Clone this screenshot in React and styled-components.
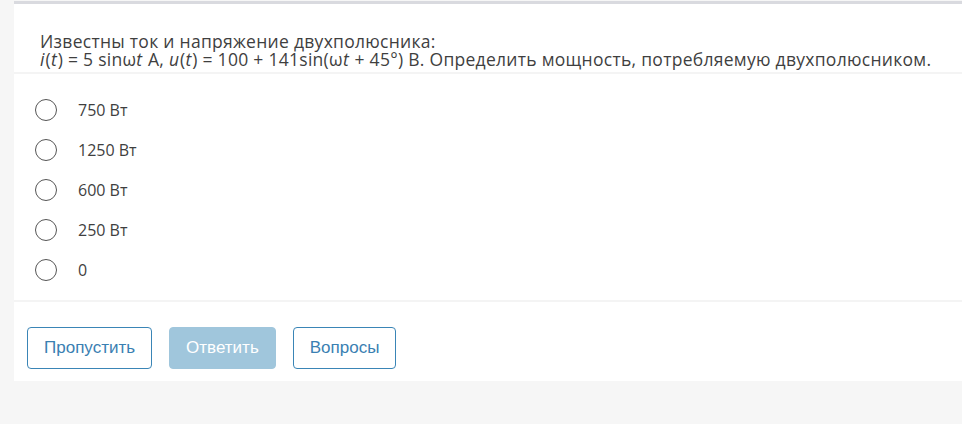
import React, { useState } from 'react';
import styled, { createGlobalStyle } from 'styled-components';

const GlobalStyle = createGlobalStyle`
  html, body {
    margin: 0;
    padding: 0;
    background: #f6f6f6;
  }
`;

const options = ['750 Вт', '1250 Вт', '600 Вт', '250 Вт', '0'];

const App = () => {
  const [selected, setSelected] = useState(null);

  return (
    <>
      <GlobalStyle />
      <Page>
        <Card>
          <Question>
            Известны ток и напряжение двухполюсника:
            <br />
            <i>i</i>(<i>t</i>) = 5 sinω<i>t</i> A, <i>u</i>(<i>t</i>) = 100 + 141sin(ω<i>t</i> + 45°) В. Определить
            мощность, потребляемую двухполюсником.
          </Question>
          <Options>
            {options.map((opt, i) => (
              <Option key={opt} onClick={() => setSelected(i)}>
                <Radio checked={selected === i} />
                <OptionText>{opt}</OptionText>
              </Option>
            ))}
          </Options>
          <Footer>
            <Button>Пропустить</Button>
            <Button primary disabled>
              Ответить
            </Button>
            <Button>Вопросы</Button>
          </Footer>
        </Card>
      </Page>
    </>
  );
};

export default App;

const Page = styled.div`
  height: 424px;
  padding-top: 1px;
  box-sizing: border-box;
`;

const Card = styled.div`
  margin-left: 14px;
  background: #fff;
  border-top: 3px solid #d9dadf;
`;

const Question = styled.div`
  padding: 28px 26px 4px;
  font-family: 'Open Sans', sans-serif;
  font-size: 17.5px;
  letter-spacing: 0.28px;
  line-height: 18px;
  color: #3f3f3f;
  border-bottom: 2px solid #f4f4f4;
  white-space: nowrap;
  i {
    font-style: italic;
    letter-spacing: 1px;
  }
`;

const Options = styled.div`
  padding: 16px 0 10px 21px;
  border-bottom: 2px solid #f4f4f4;
`;

const Option = styled.label`
  display: flex;
  align-items: center;
  height: 40px;
  font-family: 'Open Sans', sans-serif;
  font-size: 16px;
  color: #3f3f3f;
  cursor: pointer;
`;

const OptionText = styled.span`
  margin-left: 21px;
`;

const Radio = styled.span`
  width: 20px;
  height: 20px;
  border: 1.5px solid #555;
  border-radius: 50%;
  box-sizing: content-box;
  background: ${({ checked }) => (checked ? 'radial-gradient(#337ab7 45%, #fff 50%)' : '#fff')};
`;

const Footer = styled.div`
  display: flex;
  gap: 17px;
  padding: 25px 13px 12px;
`;

const Button = styled.button`
  height: 42px;
  padding: 0 16px;
  border-radius: 4px;
  font-family: 'Liberation Sans', Arial, sans-serif;
  font-size: 17px;
  border: 1px solid ${({ primary }) => (primary ? '#a0c6dc' : '#3a85b6')};
  background: ${({ primary }) => (primary ? '#a0c6dc' : '#fff')};
  color: ${({ primary }) => (primary ? '#fff' : '#3a80b2')};
  cursor: ${({ disabled }) => (disabled ? 'default' : 'pointer')};
`;
